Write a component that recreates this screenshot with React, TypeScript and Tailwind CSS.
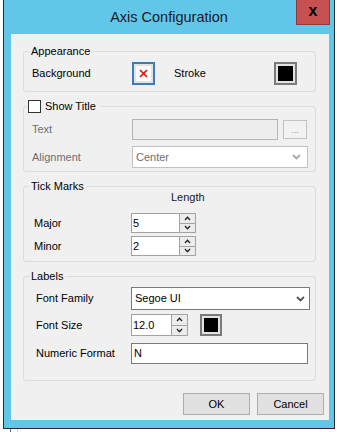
import type { ReactNode } from 'react'

const Chevron = ({ color = '#555' }: { color?: string }) => (
  <svg width="9" height="6" viewBox="0 0 9 6" className="shrink-0">
    <polyline points="1,1 4.5,4.5 8,1" fill="none" stroke={color} strokeWidth="1.8" />
  </svg>
)

const Arrow = ({ up }: { up?: boolean }) => (
  <svg width="7" height="5" viewBox="0 0 7 5">
    <polyline
      points={up ? '1,4 3.5,1.3 6,4' : '1,1 3.5,3.7 6,1'}
      fill="none"
      stroke="#222"
      strokeWidth="1.3"
    />
  </svg>
)

function Group({ legend, children, className }: { legend: ReactNode; children: ReactNode; className?: string }) {
  return (
    <fieldset className={`mx-0 ml-[12px] w-[293px] border border-[#d8dde0] rounded-[3px] p-0 ${className ?? ''}`}>
      {legend}
      {children}
    </fieldset>
  )
}

function Legend({ text }: { text: string }) {
  return <legend className="ml-[5px] px-[2px] text-[11px] leading-[13px] text-black">{text}</legend>
}

function Spinner({ value, width, height }: { value: string; width: string; height: string }) {
  return (
    <div className={`flex border border-[#a2a2a2] bg-white ${width} ${height}`}>
      <div className="flex-1 pl-[1px] text-[11px] leading-none flex items-center text-black">{value}</div>
      <div className="w-[16px] flex flex-col gap-[1px] bg-[#a2a2a2] border-l border-[#a2a2a2]">
        <div className="flex-1 bg-[#ececec] flex items-center justify-center">
          <Arrow up />
        </div>
        <div className="flex-1 bg-[#ececec] flex items-center justify-center">
          <Arrow />
        </div>
      </div>
    </div>
  )
}

export default function App() {
  return (
    <div className="w-[337px] h-[432px] bg-white flex flex-col font-['Liberation_Sans',Arial,sans-serif] text-[11px] text-black overflow-hidden">
      <div className="flex">
        <div className="ml-[3px] w-[332px] h-[429px] bg-[#62c6e9] border-x border-b border-[#2a2a2a] flex flex-col">
          {/* Title bar */}
          <div className="relative h-[34px] flex items-center justify-center pt-[2px]">
            <span className="text-[14.5px] text-[#1a1a2a]">Axis Configuration</span>
            <div className="absolute top-0 right-[4px] w-[34px] h-[25px] bg-[#c75050] border border-[#8c3a3a] border-t-0 flex items-center justify-center">
              <span className="text-[16px] font-black leading-none text-black -mt-[2px]">x</span>
            </div>
          </div>

          {/* Client area */}
          <div className="ml-[7px] mr-[5px] h-[386px] bg-[#f0f0f0] pt-[11px] flex flex-col">
            <Group legend={<Legend text="Appearance" />}>
              <div className="flex items-center pl-[8px] mt-[4px] h-[23px] mb-[6px]">
                <span className="w-[100px]">Background</span>
                <div className="w-[23px] h-[23px] border-2 border-[#3d7cb4] bg-[#e3e3e3] p-[2px]">
                  <div className="w-full h-full bg-white flex items-center justify-center">
                    <svg width="9" height="9" viewBox="0 0 9 9">
                      <path d="M1 1 L8 8 M8 1 L1 8" stroke="#ff0000" strokeWidth="1.6" />
                    </svg>
                  </div>
                </div>
                <span className="ml-[19px] w-[100px]">Stroke</span>
                <div className="w-[23px] h-[23px] border-2 border-[#7a7a7a] bg-[#e3e3e3] p-[2px]">
                  <div className="w-full h-full bg-black" />
                </div>
              </div>
            </Group>

            <Group
              className="mt-[8px]"
              legend={
                <legend className="ml-[3px] px-[1px] flex items-center gap-[4px] leading-[13px] pr-[5px]">
                  <span className="w-[13px] h-[13px] border border-[#333] bg-white" />
                  <span>Show Title</span>
                </legend>
              }
            >
              <div className="flex items-center pl-[8px] mt-[6px] h-[21px] text-[#6d6d6d]">
                <span className="w-[100px]">Text</span>
                <div className="w-[146px] h-[21px] border border-[#b4b4b4] bg-[#ededed]" />
                <div className="ml-[5px] w-[24px] h-[19px] border border-[#c2c2c2] bg-[#f2f2f2] flex items-end justify-center pb-[3px] text-[9px] leading-none text-[#9a9a9a]">
                  ...
                </div>
              </div>
              <div className="flex items-center pl-[8px] mt-[6px] h-[22px] mb-[3px] text-[#6d6d6d]">
                <span className="w-[100px]">Alignment</span>
                <div className="w-[176px] h-[22px] border border-[#c2c2c2] bg-white flex items-center justify-between pl-[3px] pr-[6px]">
                  <span>Center</span>
                  <Chevron color="#a8a8a8" />
                </div>
              </div>
            </Group>

            <Group className="mt-[8px]" legend={<Legend text="Tick Marks" />}>
              <div className="-mt-[2px] h-[13px] leading-[13px] pl-[131px] text-[#1a1a1a]">
                <span className="ml-[16px]">Length</span>
              </div>
              <div className="flex items-center pl-[10px] mt-[9px] h-[20px]">
                <span className="w-[97px]">Major</span>
                <Spinner value="5" width="w-[65px]" height="h-[20px]" />
              </div>
              <div className="flex items-center pl-[10px] mt-[3px] h-[20px] mb-[5px]">
                <span className="w-[97px]">Minor</span>
                <Spinner value="2" width="w-[65px]" height="h-[20px]" />
              </div>
            </Group>

            <Group className="mt-[8px]" legend={<Legend text="Labels" />}>
              <div className="flex items-center pl-[12px] mt-[4px] h-[23px]">
                <span className="w-[95px]">Font Family</span>
                <div className="w-[179px] h-[23px] border border-[#7a7a7a] bg-white flex items-center justify-between pl-[3px] pr-[4px]">
                  <span>Segoe UI</span>
                  <Chevron />
                </div>
              </div>
              <div className="flex items-center pl-[12px] mt-[4px] h-[22px]">
                <span className="w-[95px]">Font Size</span>
                <Spinner value="12.0" width="w-[57px]" height="h-[22px]" />
                <div className="ml-[12px] w-[22px] h-[22px] border-2 border-[#7a7a7a] bg-[#e3e3e3] p-[2px]">
                  <div className="w-full h-full bg-black" />
                </div>
              </div>
              <div className="flex items-center pl-[12px] mt-[7px] h-[21px] mb-[16px]">
                <span className="w-[95px]">Numeric Format</span>
                <div className="w-[177px] h-[21px] border border-[#7a7a7a] bg-white flex items-center pl-[2px]">
                  N
                </div>
              </div>
            </Group>

            <div className="flex mt-[12px] pl-[172px] gap-[7px]">
              <button className="w-[67px] h-[22px] bg-[#e1e1e1] border border-[#adadad] text-[11px] leading-none">OK</button>
              <button className="w-[67px] h-[22px] bg-[#e1e1e1] border border-[#adadad] text-[11px] leading-none">Cancel</button>
            </div>
          </div>
        </div>
      </div>
      <div className="flex h-[3px]">
        <div className="ml-[10px] w-[1px] bg-[#6a6a6a]" />
        <div className="ml-[6px] w-[1px] bg-[#d4d4d4]" />
      </div>
    </div>
  )
}
